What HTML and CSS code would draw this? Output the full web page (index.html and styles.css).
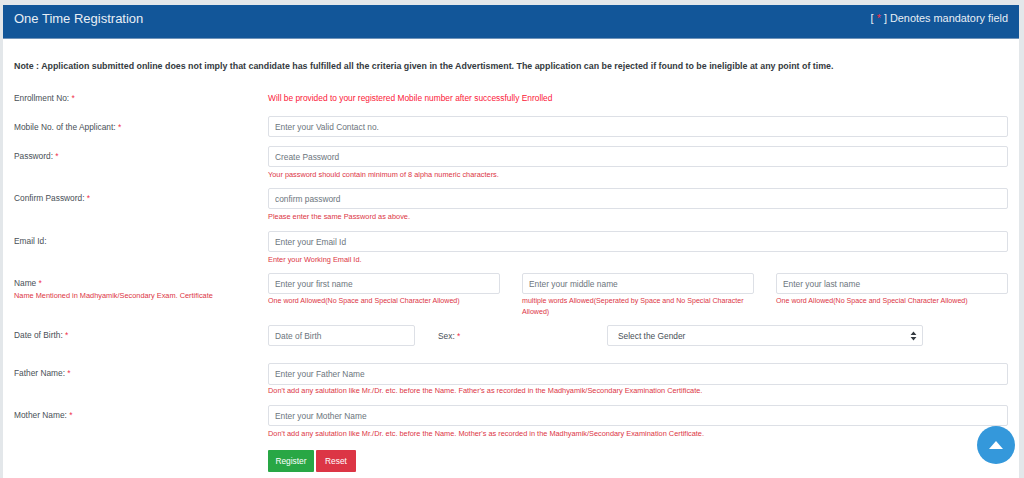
FILE: index.html

```html
<!DOCTYPE html>
<html lang="en">
<head>
  <meta charset="UTF-8">
  <meta name="viewport" content="width=device-width, initial-scale=1.0">
  <title>One Time Registration</title>
  <link rel="stylesheet" href="styles.css">
</head>
<body>
  <div class="card">
    <div class="card-header">
      <h1 class="card-title">One Time Registration</h1>
      <div class="mandatory">[ <span class="star">*</span> ] Denotes mandatory field</div>
    </div>

    <form class="card-body">
      <p class="note">Note : Application submitted online does not imply that candidate has fulfilled all the criteria given in the Advertisment. The application can be rejected if found to be ineligible at any point of time.</p>

      <div class="form-row row-enroll">
        <label class="label">Enrollment No: <span class="star">*</span></label>
        <div class="field enroll-text">Will be provided to your registered Mobile number after successfully Enrolled</div>
      </div>

      <div class="form-row row-mobile">
        <label class="label">Mobile No. of the Applicant: <span class="star">*</span></label>
        <div class="field">
          <input type="text" class="input" placeholder="Enter your Valid Contact no.">
        </div>
      </div>

      <div class="form-row row-password">
        <label class="label">Password: <span class="star">*</span></label>
        <div class="field">
          <input type="password" class="input" placeholder="Create Password">
          <div class="help-text">Your password should contain minimum of 8 alpha numeric characters.</div>
        </div>
      </div>

      <div class="form-row row-confirm">
        <label class="label">Confirm Password: <span class="star">*</span></label>
        <div class="field">
          <input type="password" class="input" placeholder="confirm password">
          <div class="help-text">Please enter the same Password as above.</div>
        </div>
      </div>

      <div class="form-row row-email">
        <label class="label">Email Id:</label>
        <div class="field">
          <input type="text" class="input" placeholder="Enter your Email Id">
          <div class="help-text">Enter your Working Email Id.</div>
        </div>
      </div>

      <div class="form-row row-name">
        <div class="label">
          <label>Name <span class="star">*</span></label>
          <div class="help-text name-help">Name Mentioned in Madhyamik/Secondary Exam. Certificate</div>
        </div>
        <div class="field name-fields">
          <div class="name-col">
            <input type="text" class="input" placeholder="Enter your first name">
            <div class="help-text">One word Allowed(No Space and Special Character Allowed)</div>
          </div>
          <div class="name-col">
            <input type="text" class="input" placeholder="Enter your middle name">
            <div class="help-text">multiple words Allowed(Seperated by Space and No Special Character Allowed)</div>
          </div>
          <div class="name-col">
            <input type="text" class="input" placeholder="Enter your last name">
            <div class="help-text">One word Allowed(No Space and Special Character Allowed)</div>
          </div>
        </div>
      </div>

      <div class="form-row row-dob">
        <label class="label">Date of Birth: <span class="star">*</span></label>
        <div class="field dob-fields">
          <input type="text" class="input dob-input" placeholder="Date of Birth">
          <label class="sex-label">Sex: <span class="star">*</span></label>
          <div class="select-wrap">
            <select class="select">
              <option>Select the Gender</option>
            </select>
            <svg class="select-arrows" width="7" height="10" viewBox="0 0 8 12">
              <path d="M4 0.5 L7.5 4.8 L0.5 4.8 Z M4 11.5 L0.5 7.2 L7.5 7.2 Z" fill="#343a40"/>
            </svg>
          </div>
        </div>
      </div>

      <div class="form-row row-father">
        <label class="label">Father Name: <span class="star">*</span></label>
        <div class="field">
          <input type="text" class="input tall" placeholder="Enter your Father Name">
          <div class="help-text tight">Don't add any salutation like Mr./Dr. etc. before the Name. Father's as recorded in the Madhyamik/Secondary Examination Certificate.</div>
        </div>
      </div>

      <div class="form-row row-mother">
        <label class="label">Mother Name: <span class="star">*</span></label>
        <div class="field">
          <input type="text" class="input" placeholder="Enter your Mother Name">
          <div class="help-text">Don't add any salutation like Mr./Dr. etc. before the Name. Mother's as recorded in the Madhyamik/Secondary Examination Certificate.</div>
        </div>
      </div>

      <div class="form-row row-buttons">
        <div class="label"></div>
        <div class="field buttons">
          <button type="button" class="button success">Register</button>
          <button type="button" class="button danger">Reset</button>
        </div>
      </div>
    </form>
  </div>

  <a class="scroll-top" href="#">
    <svg width="14" height="8" viewBox="0 0 14 8"><path d="M7 0 L14 8 L0 8 Z" fill="#fff"/></svg>
  </a>
</body>
</html>
```

FILE: styles.css

```css
* {
  margin: 0;
  padding: 0;
  box-sizing: border-box;
}

html, body {
  height: 100%;
  overflow: hidden;
}

body {
  background: #e3e7ea;
  font-family: "Liberation Sans", Arial, sans-serif;
  font-size: 9px;
  color: #495057;
  padding: 5px 5px 0 3px;
}

.card {
  background: white;
  height: 100%;
}

.card-header {
  display: flex;
  align-items: center;
  justify-content: space-between;
  height: 34px;
  padding: 0 11px;
  background: #125699;
  border-bottom: 1px solid #6f93b9;
  color: #e8eef5;
}

.card-title {
  font-size: 13px;
  font-weight: normal;
  margin-top: -7px;
}

.mandatory {
  font-size: 10.9px;
  margin-top: -7px;
}

.star {
  color: #f0304a;
}

.card-body {
  padding: 21px 11.5px 0 11px;
}

.note {
  font-size: 8.86px;
  font-weight: bold;
  line-height: 12px;
  color: #343a40;
}

.form-row {
  display: flex;
}

.label {
  width: 254px;
  flex-shrink: 0;
  line-height: 12px;
  font-size: 8.35px;
}

.field {
  flex: 1;
  min-width: 0;
}

.row-enroll { margin-top: 20px; }
.row-mobile { margin-top: 12px; }
.row-password { margin-top: 9px; }
.row-confirm { margin-top: 8px; }
.row-email { margin-top: 9px; }
.row-name { margin-top: 8px; }
.row-dob { margin-top: 7px; }
.row-father { margin-top: 17px; }
.row-mother { margin-top: 9px; }
.row-buttons { margin-top: 11px; }

.row-mobile .label,
.row-password .label,
.row-confirm .label,
.row-email .label,
.row-name .label,
.row-dob .label,
.row-father .label,
.row-mother .label {
  padding-top: 4px;
}

.row-mobile .label {
  padding-top: 5px;
}

.enroll-text {
  color: #fb2039;
  font-size: 8.4px;
  line-height: 12px;
}

.input {
  display: block;
  width: 100%;
  height: 21px;
  padding: 0 6px;
  border: 1px solid #dde0e6;
  border-radius: 2px;
  background: white;
  font-family: inherit;
  font-size: 8.37px;
  color: #495057;
}

.input.tall {
  height: 22px;
}

.input::placeholder {
  color: #6c757d;
  opacity: 1;
}

.help-text {
  color: #dc3545;
  font-size: 7.36px;
  line-height: 11px;
  margin-top: 2px;
}

.help-text.tight {
  margin-top: 0;
}

.name-help {
  margin-top: 1px;
  line-height: 12px;
}

.name-fields {
  display: flex;
  gap: 22.5px;
}

.name-col {
  flex: 1;
  min-width: 0;
}

.name-col .help-text {
  font-size: 7.1px;
}

.dob-fields {
  display: flex;
  align-items: center;
}

.dob-input {
  width: 147px;
  flex-shrink: 0;
}

.sex-label {
  width: 192px;
  flex-shrink: 0;
  padding-left: 23px;
  font-size: 8.35px;
}

.select-wrap {
  position: relative;
  width: 316px;
}

.select {
  display: block;
  width: 100%;
  height: 21px;
  padding: 0 10px;
  border: 1px solid #dde0e6;
  border-radius: 2px;
  background: white;
  font-family: inherit;
  font-size: 8.37px;
  color: #495057;
  appearance: none;
}

.select-arrows {
  position: absolute;
  top: 5.5px;
  right: 6.5px;
}

.buttons {
  display: flex;
  gap: 2px;
}

.button {
  height: 22px;
  border: 1px solid transparent;
  border-radius: 1px;
  font-family: inherit;
  font-size: 8.37px;
  color: white;
  cursor: pointer;
}

.button.success {
  width: 46px;
  background: #28a745;
}

.button.danger {
  width: 40px;
  background: #dc3545;
}

.scroll-top {
  position: fixed;
  right: 9px;
  bottom: 14px;
  display: flex;
  align-items: center;
  justify-content: center;
  width: 38px;
  height: 38px;
  border-radius: 50%;
  background: #3498db;
}
```
